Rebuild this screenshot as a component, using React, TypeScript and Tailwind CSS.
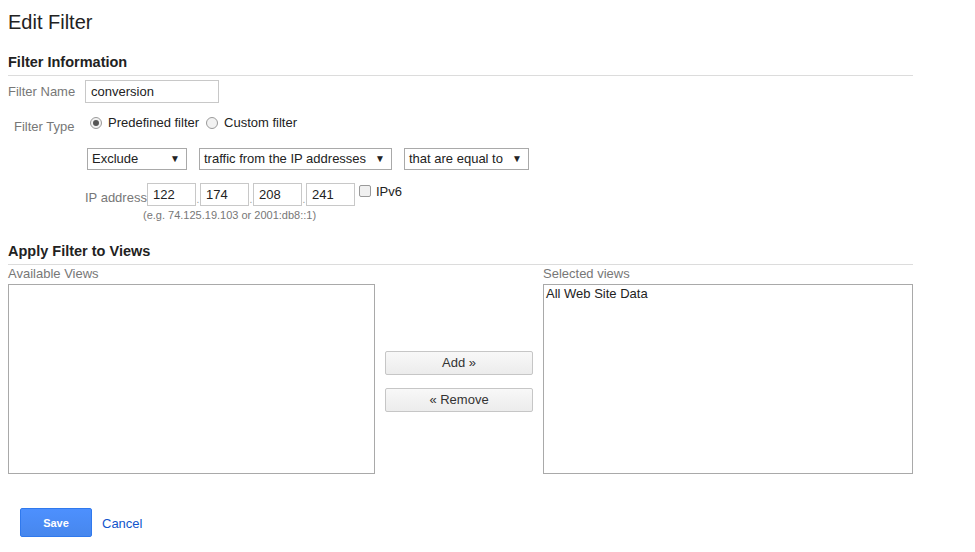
import { useState } from "react";

const font = { fontFamily: '"Liberation Sans", Arial, sans-serif' };

function Select({ label, width }: { label: string; width: string }) {
  return (
    <div
      className={`${width} h-[22px] border border-[#a9a9a9] bg-white flex items-center justify-between pl-[4px] pr-[6px] text-[13px] leading-[16px] text-[#222]`}
    >
      <span>{label}</span>
      <span className="text-[10px] leading-none">▼</span>
    </div>
  );
}

function IpBox({ value }: { value: string }) {
  return (
    <div className="w-[49px] h-[23px] border border-[#c8c8c8] bg-white pl-[5px] pt-[3px] text-[13px] leading-[15px] text-[#222]">
      {value}
    </div>
  );
}

function Dot() {
  return <span className="w-[4px] text-center text-[#999] text-[10px] leading-[10px] pt-[12px]">.</span>;
}

export default function App() {
  const [type, setType] = useState("predefined");

  return (
    <div style={font} className="w-[975px] h-[552px] bg-white text-[#222] px-[8px] overflow-hidden leading-[16px]">
      <h1 className="text-[20px] leading-[24px] pt-[10px] font-normal">Edit Filter</h1>

      <div className="mt-[19px] w-[905px] border-b border-[#dcdcdc] pb-[4px]">
        <h2 className="text-[14.5px] leading-[18px] font-bold">Filter Information</h2>
      </div>

      <div className="flex items-center mt-[4px] h-[23px]">
        <span className="w-[77px] text-[13px] text-[#777]">Filter Name</span>
        <div className="w-[134px] h-[23px] border border-[#c8c8c8] pl-[5px] pt-[3px] text-[13px] leading-[15px]">
          conversion
        </div>
      </div>

      <div className="flex items-start mt-[12px] h-[24px]">
        <span className="w-[82px] pl-[6px] pt-[4px] text-[13px] text-[#777]">Filter Type</span>
        <label className="flex items-center gap-[6px] text-[13px] cursor-pointer" onClick={() => setType("predefined")}>
          <span className="w-[12px] h-[12px] rounded-full border border-[#9a9a9a] bg-[#f2f2f2] flex items-center justify-center">
            {type === "predefined" && <span className="w-[6px] h-[6px] rounded-full bg-[#555]" />}
          </span>
          Predefined filter
        </label>
        <label className="flex items-center gap-[6px] text-[13px] ml-[7px] cursor-pointer" onClick={() => setType("custom")}>
          <span className="w-[12px] h-[12px] rounded-full border border-[#9a9a9a] bg-[#f2f2f2] flex items-center justify-center">
            {type === "custom" && <span className="w-[6px] h-[6px] rounded-full bg-[#555]" />}
          </span>
          Custom filter
        </label>
      </div>

      <div className="flex items-center gap-[12px] mt-[9px] ml-[79px]">
        <Select label="Exclude" width="w-[100px]" />
        <Select label="traffic from the IP addresses" width="w-[193px]" />
        <Select label="that are equal to" width="w-[125px]" />
      </div>

      <div className="flex items-start mt-[13px] ml-[77px] h-[23px]">
        <span className="text-[13px] leading-[16px] text-[#777] pt-[7px]">IP address</span>
        <IpBox value="122" />
        <Dot />
        <IpBox value="174" />
        <Dot />
        <IpBox value="208" />
        <Dot />
        <IpBox value="241" />
        <span className="ml-[4px] mt-[2px] w-[12px] h-[12px] border border-[#9a9a9a] rounded-[2px] bg-[#f0f0f0]" />
        <span className="ml-[5px] text-[13px] leading-[15px] pt-[1px]">IPv6</span>
      </div>
      <div className="ml-[135px] mt-[3px] text-[11px] leading-[13px] text-[#777]">(e.g. 74.125.19.103 or 2001:db8::1)</div>

      <div className="mt-[20px] w-[905px] border-b border-[#dcdcdc] pb-[4px]">
        <h2 className="text-[14.5px] leading-[18px] font-bold">Apply Filter to Views</h2>
      </div>

      <div className="flex">
        <div className="flex flex-col">
          <span className="text-[13px] leading-[18px] text-[#777]">Available Views</span>
          <div className="mt-[1px] w-[367px] h-[190px] border border-[#a9a9a9]" />
        </div>
        <div className="flex flex-col gap-[13px] ml-[10px] mt-[86px]">
          <button className="w-[148px] h-[24px] border border-[#c6c6c6] rounded-[2px] bg-gradient-to-b from-[#f8f8f8] to-[#ececec] text-[13px] text-[#333]">
            Add »
          </button>
          <button className="w-[148px] h-[24px] border border-[#c6c6c6] rounded-[2px] bg-gradient-to-b from-[#f8f8f8] to-[#ececec] text-[13px] text-[#333]">
            « Remove
          </button>
        </div>
        <div className="flex flex-col ml-[10px]">
          <span className="text-[13px] leading-[18px] text-[#777]">Selected views</span>
          <div className="mt-[1px] w-[370px] h-[190px] border border-[#a9a9a9] pl-[2px] pt-[1px] text-[13px]">
            All Web Site Data
          </div>
        </div>
      </div>

      <div className="flex items-center mt-[34px] ml-[12px]">
        <button className="w-[72px] h-[29px] rounded-[2px] border border-[#3079ed] bg-gradient-to-b from-[#4d90fe] to-[#4787ed] text-white text-[11px] font-bold">
          Save
        </button>
        <a href="#" className="ml-[10px] mt-[2px] text-[13px] text-[#15c]">Cancel</a>
      </div>
    </div>
  );
}
